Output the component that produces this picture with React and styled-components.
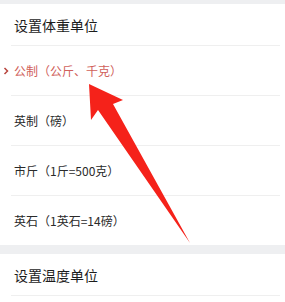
import React from "react";
import styled, { createGlobalStyle } from "styled-components";

const GlobalStyle = createGlobalStyle`
  html, body {
    margin: 0;
    padding: 0;
    background: #ffffff;
  }
  body {
    font-family: "Noto Sans CJK SC", "Noto Sans", sans-serif;
  }
`;

const S = {};

S.Page = styled.div`
  position: relative;
  width: 285px;
  height: 302px;
  overflow: hidden;
  background: #ffffff;
`;

S.Band = styled.div`
  height: ${(p) => p.h}px;
  background: #eeeff1;
`;

S.Section = styled.div`
  background: #ffffff;
  display: flex;
  flex-direction: column;
`;

S.Header = styled.div`
  height: 41px;
  display: flex;
  align-items: center;
  margin-left: 11px;
  margin-right: 5px;
  padding-left: 3px;
  border-bottom: 1px solid #efefef;
  font-size: 14px;
  font-weight: 400;
  color: #1c1c1c;
`;

S.List = styled.div`
  display: flex;
  flex-direction: column;
`;

S.Row = styled.div`
  position: relative;
  height: 49px;
  display: flex;
  align-items: center;
  margin-left: 11px;
  margin-right: 5px;
  padding-left: 3px;
  border-bottom: ${(p) => (p.last ? "none" : "1px solid #efefef")};
  font-size: 12px;
  color: ${(p) => (p.active ? "#d0605a" : "#2a2a2a")};
`;

S.Chevron = styled.svg`
  position: absolute;
  left: -8px;
  width: 6px;
  height: 8px;
`;

S.Arrow = styled.svg`
  position: absolute;
  left: 0;
  top: 0;
  width: 285px;
  height: 302px;
  pointer-events: none;
`;

const weightUnits = [
  "公制（公斤、千克）",
  "英制（磅）",
  "市斤（1斤=500克）",
  "英石（1英石=14磅）",
];

function Chevron() {
  return (
    <S.Chevron viewBox="0 0 6 8">
      <polyline
        points="1.5,1 4.5,4 1.5,7"
        fill="none"
        stroke="#b8463f"
        strokeWidth="1.5"
      />
    </S.Chevron>
  );
}

export default function App() {
  return (
    <S.Page>
      <GlobalStyle />
      <S.Band h={4} />
      <S.Section>
        <S.Header>设置体重单位</S.Header>
        <S.List>
          {weightUnits.map((u, i) => (
            <S.Row key={u} active={i === 0} last={i === weightUnits.length - 1}>
              {i === 0 && <Chevron />}
              {u}
            </S.Row>
          ))}
        </S.List>
      </S.Section>
      <S.Band h={9} />
      <S.Section>
        <S.Header>设置温度单位</S.Header>
      </S.Section>
      <S.Arrow viewBox="0 0 285 302">
        <polygon
          points="89,84 123,100 113,104 190,243 98,110 91,120"
          fill="#f5221a"
        />
      </S.Arrow>
    </S.Page>
  );
}
